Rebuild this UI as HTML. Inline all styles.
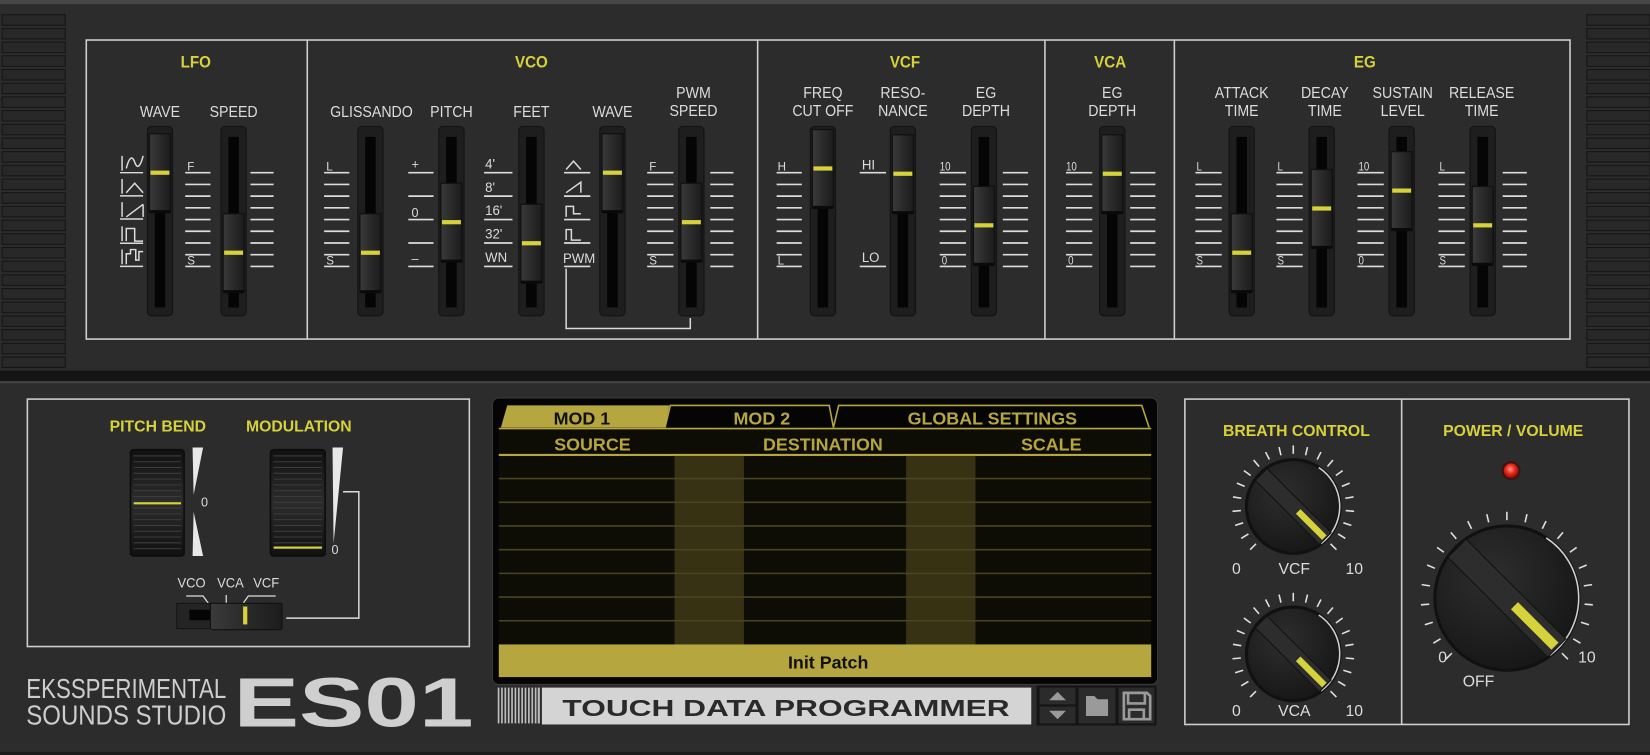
<!DOCTYPE html>
<html><head><meta charset="utf-8">
<style>
html,body{margin:0;padding:0;background:#2b2b2b;overflow:hidden;width:1650px;height:755px}
svg{display:block}
text{font-family:"Liberation Sans",sans-serif}
</style></head><body>
<svg id="s" width="1650" height="755" viewBox="0 0 1568 717" preserveAspectRatio="none" xmlns="http://www.w3.org/2000/svg">
<defs>
<linearGradient id="kn" x1="0" x2="1"><stop offset="0" stop-color="#3a3a3a"/><stop offset="0.5" stop-color="#2a2a2a"/><stop offset="1" stop-color="#1c1c1c"/></linearGradient>
<linearGradient id="wh" x1="0" x2="0" y1="0" y2="1"><stop offset="0" stop-color="#111"/><stop offset="0.5" stop-color="#2c2c2c"/><stop offset="1" stop-color="#111"/></linearGradient>
<radialGradient id="rk" cx="0.4" cy="0.35" r="0.7"><stop offset="0" stop-color="#2e2e2e"/><stop offset="1" stop-color="#161616"/></radialGradient>
<radialGradient id="led" cx="0.45" cy="0.4" r="0.6"><stop offset="0" stop-color="#ff9a8a"/><stop offset="0.5" stop-color="#ee2a1a"/><stop offset="1" stop-color="#8a0c05"/></radialGradient>
</defs>
</svg>
<script>
var o=[];
function R(x,y,w,h,f,extra){o.push('<rect x="'+x+'" y="'+y+'" width="'+w+'" height="'+h+'" fill="'+f+'" '+(extra||'')+'/>');}
function L(x1,y1,x2,y2,c,w){o.push('<line x1="'+x1+'" y1="'+y1+'" x2="'+x2+'" y2="'+y2+'" stroke="'+(c||'#d8d8d8')+'" stroke-width="'+(w||1.5)+'"/>');}
function T(x,y,s,t,c,sz,a,extra){o.push('<text x="'+x+'" y="'+y+'" font-size="'+sz+'" fill="'+c+'" text-anchor="'+(a||'middle')+'" '+(extra||'')+'>'+t+'</text>');}
function N(x,y,t,c,sz,a,k){k=k||0.84;o.push('<text transform="translate('+x+' '+y+') scale('+k+' 1)" x="0" y="0" font-size="'+sz+'" fill="'+c+'" text-anchor="'+(a||'middle')+'">'+t+'</text>');}
var Y='#d6d23c',W='#dcdcdc';
R(0,0,1568,717,'#2c2c2c');
R(0,0,1568,4,'#474747');
R(0,352,1568,10,'#151515');
R(0,362,1568,2,'#444');
R(0,714,1568,3,'#1a1a1a');
for(var y=14;y<348;y+=13){R(2,y,60,10,'#282828','stroke="#151515" stroke-width="1"');R(1508,y,60,10,'#282828','stroke="#151515" stroke-width="1"');}
o.push('<rect x="82" y="38" width="1410" height="284" fill="none" stroke="#cfcfcf" stroke-width="1.5"/>');
[292,720,993,1116].forEach(function(x){L(x,38,x,322,'#cfcfcf');});
[['LFO',186],['VCO',505],['VCF',860],['VCA',1055],['EG',1297]].forEach(function(a){N(a[1],64,a[0],Y,16,'middle',0.9);o[o.length-1]=o[o.length-1].replace('<text ','<text font-weight="bold" ');});
function lab(x,l1,l2){if(l2){N(x,93,l1,W,14.5,'middle',0.93);N(x,110,l2,W,14.5,'middle',0.93);}else N(x,111,l1,W,14.5,'middle',0.93);}
lab(152,'WAVE');lab(222,'SPEED');lab(353,'GLISSANDO');lab(429,'PITCH');lab(505,'FEET');lab(582,'WAVE');lab(659,'PWM','SPEED');
lab(782,'FREQ','CUT OFF');lab(858,'RESO-','NANCE');lab(937,'EG','DEPTH');lab(1057,'EG','DEPTH');
lab(1180,'ATTACK','TIME');lab(1259,'DECAY','TIME');lab(1333,'SUSTAIN','LEVEL');lab(1408,'RELEASE','TIME');
function scale(x,w,n,top,bot){n=n||9;top=top||164;bot=bot||253;for(var i=0;i<n;i++){var y=top+(bot-top)*i/(n-1);L(x,y,x+w,y,W,1.6);}}
function slider(cx,yy){
 R(cx-12,120,24,180,'#1e1e1e','rx="4" stroke="#121212"');
 R(cx-5,130,10,162,'#050505');
 R(cx-10,yy-37,20,74,'url(#kn)','stroke="#111" stroke-width="1.2"');
 L(cx-10,yy+37,cx+10,yy+37,'#0a0a0a',3);
 R(cx-9,yy-2,18,4,Y);
}
// LFO
scale(176,24);scale(238,22);
N(178,162,'F',W,11,'start',1);N(178,251,'S',W,11,'start',1);
o.push('<g fill="none" stroke="'+W+'" stroke-width="1.4">'+
 '<path d="M114 164 h22 M114 186 h22 M114 208 h22 M114 231 h22 M114 253 h22"/>'+
 '<path d="M116 162 v-14 M116 184 v-14 M116 206 v-14 M116 229 v-14 M116 251 v-14"/>'+
 '<path d="M120 160 c3 -12 6 -12 8 -6 c2 6 5 6 8 -6"/>'+
 '<path d="M120 183 l8 -9 l8 9"/>'+
 '<path d="M120 206 l16 -12"/><path d="M136 194 v12"/>'+
 '<path d="M120 229 v-12 h8 v12 h8"/>'+
 '<path d="M120 251 v-10 h4 v-4 h5 v10 h3 v-8 h4"/></g>');
slider(152,164);slider(222,240);
// VCO
scale(308,24);N(310,162,'L',W,11,'start',1);N(310,251,'S',W,11,'start',1);
scale(388,24,5);N(391,160,'+',W,12,'start',1);N(391,206,'0',W,12,'start',1);N(391,250,'–',W,12,'start',1);
scale(460,27,5);['4\'','8\'','16\'','32\'','WN'].forEach(function(t,i){N(461,160+i*22.2,t,W,13.5,'start',0.93);});
scale(536,25,5);
o.push('<g fill="none" stroke="'+W+'" stroke-width="1.4"><path d="M538 161 l7 -8 l7 8"/><path d="M538 183 l14 -10 v10"/><path d="M538 206 v-10 h7 v7 h7"/><path d="M538 228 v-10 h5 v10 h9"/></g>');
N(535,250,'PWM',W,13.5,'start',0.93);
scale(615,25);N(617,162,'F',W,11,'start',1);N(617,251,'S',W,11,'start',1);scale(675,22);
o.push('<path d="M538 255 V312 H656 V302" fill="none" stroke="'+W+'" stroke-width="1.4"/>');
slider(352,240);slider(429,211);slider(505,231);slider(582,164);slider(657,211);
// VCF
scale(738,24);N(739,162,'H',W,11,'start',1);N(739,251,'L',W,11,'start',1);
L(817,164,842,164,W,1.6);L(817,253,842,253,W,1.6);N(819,161,'HI',W,13.5,'start',0.93);N(819,249,'LO',W,13.5,'start',0.93);
scale(893,25);N(893,162,'10',W,11,'start');N(895,251,'0',W,11,'start');scale(953,24);
slider(782,160);slider(858,165);slider(935,214);
// VCA
scale(1013,25);N(1013,162,'10',W,11,'start');N(1015,251,'0',W,11,'start');scale(1074,24);
slider(1057,165);
// EG
[[1136,'L','S'],[1213,'L','S'],[1290,'10','0'],[1367,'L','S']].forEach(function(a){scale(a[0],25);N(a[0]+1,162,a[1],W,11,'start');N(a[0]+1,251,a[2],W,11,'start');});
scale(1428,23);
slider(1180,240);slider(1256,198);slider(1332,181);slider(1409,214);

// bottom left box
o.push('<rect x="26" y="379" width="420" height="235" fill="none" stroke="#cfcfcf" stroke-width="1.5"/>');
T(150,410,0,'PITCH BEND',Y,15,'middle','font-weight="bold"');
T(284,410,0,'MODULATION',Y,15,'middle','font-weight="bold"');
function wheel(x,y,w,h,yy){R(x,y,w,h,'url(#wh)','rx="3" stroke="#0c0c0c" stroke-width="1.5"');for(var i=y+6;i<y+h-3;i+=5.5)L(x+3,i,x+w-3,i,'#3c3c3c',1);L(x+3,yy,x+w-3,yy,Y,2);}
wheel(124,427,51,101,478);wheel(257,427,52,101,520);
o.push('<polygon points="183,425 193,425 184,470" fill="#e8e8e8"/><polygon points="184,486 193,528 183,528" fill="#e8e8e8"/>');
T(191,481,0,'0',W,12,'start');
o.push('<polygon points="316,425 326,425 317,516" fill="#e8e8e8"/>');T(315,526,0,'0',W,12,'start');
o.push('<path d="M326 467 H341 V587 H272" fill="none" stroke="'+W+'" stroke-width="1.4"/>');
N(182,558,'VCO',W,13,'middle',0.95);N(219,558,'VCA',W,13,'middle',0.95);N(253,558,'VCF',W,13,'middle',0.95);
o.push('<path d="M177 566 H193 L198 573 M215 565 V573 M231 573 L236 566 H262" fill="none" stroke="'+W+'" stroke-width="1.2"/>');
R(168,573,100,24,'#242424','stroke="#151515"');R(180,579,22,10,'#050505');
R(200,573,68,25,'url(#kn)','rx="2" stroke="#111"');R(231,576,4,17,Y);
// logo
T(25,663,0,'EKSSPERIMENTAL','#cdcdcd',26,'start','textLength="190" lengthAdjust="spacingAndGlyphs"');
T(25,688,0,'SOUNDS STUDIO','#cdcdcd',26,'start','textLength="190" lengthAdjust="spacingAndGlyphs"');
T(222,690,0,'ES01','#cfcfcf',66,'start','font-family="DejaVu Sans" font-weight="bold" textLength="228" lengthAdjust="spacingAndGlyphs"');

// display
R(468,378,632,272,'#050505','rx="6" stroke="#3a3a3a"');
R(474,406,620,206,'#0d0c05');
var DY='#b6a640';
o.push('<polygon points="476,406 482,385 636,385 632,406" fill="'+DY+'"/>');
o.push('<path d="M632 406 L637 385 H788 L792 406 M792 406 L797 385 H1085 L1092 406" fill="none" stroke="'+DY+'" stroke-width="1.5"/>');
L(474,407,1094,407,DY,1.5);
var df='font-family="DejaVu Sans Condensed" font-weight="bold"';
T(553,403,0,'MOD 1','#111',17,'middle',df);T(724,403,0,'MOD 2',DY,17,'middle',df);T(943,403,0,'GLOBAL SETTINGS',DY,17,'middle',df);
T(563,428,0,'SOURCE',DY,17,'middle',df);T(782,428,0,'DESTINATION',DY,17,'middle',df);T(999,428,0,'SCALE',DY,17,'middle',df);
L(474,432,1094,432,DY,2);
R(641,433,66,179,'#373214');R(861,433,66,179,'#373214');
for(var i=1;i<8;i++)L(474,432+i*22.5,1094,432+i*22.5,'#4a4420',1.5);
R(474,612,620,31,DY);
T(787,635,0,'Init Patch','#111',17,'middle',df);
// bottom bar
for(var i=0;i<12;i++)R(473+i*3.2,653,1.6,34,'#bdbdbd');
R(511,653,2,34,'#bdbdbd');
R(515,653,465,35,'#d4d4d4');
T(747,680,0,'TOUCH DATA PROGRAMMER','#2a2a2a',22,'middle','font-family="DejaVu Sans" font-weight="bold" textLength="425" lengthAdjust="spacingAndGlyphs"');
R(985,651,114,38,'#151515');
R(988,653,34,16,'#2b2b2b');R(988,671,34,16,'#2b2b2b');R(1025,653,35,34,'#2b2b2b');R(1063,653,34,34,'#2b2b2b');
o.push('<polygon points="997,665 1005,657 1013,665" fill="#9a9a9a"/><polygon points="997,675 1013,675 1005,683" fill="#9a9a9a"/>');
o.push('<path d="M1032 661 h8 l3 3 h10 v16 h-21z" fill="#9a9a9a"/>');
o.push('<path d="M1068 658 h22 l3 3 v22 h-25z M1072 658 v10 h16 v-10 M1073 683 v-9 h14 v9" fill="none" stroke="#9a9a9a" stroke-width="2.5"/>');

// right box
o.push('<rect x="1126" y="379" width="422" height="309" fill="none" stroke="#cfcfcf" stroke-width="1.5"/>');
L(1332,379,1332,688,'#cfcfcf');
T(1232,414,0,'BREATH CONTROL',Y,15,'middle','font-weight="bold"');
T(1438,414,0,'POWER / VOLUME',Y,15,'middle','font-weight="bold"');
function knobR(cx,cy,r,n){
 var s='';
 for(var i=0;i<n;i++){var a=(-135+270*i/(n-1))*Math.PI/180;var r1=r+6,r2=r+14;
  s+='<line x1="'+(cx+r1*Math.sin(a)).toFixed(1)+'" y1="'+(cy-r1*Math.cos(a)).toFixed(1)+'" x2="'+(cx+r2*Math.sin(a)).toFixed(1)+'" y2="'+(cy-r2*Math.cos(a)).toFixed(1)+'" stroke="#e0e0e0" stroke-width="1.5"/>';}
 o.push(s);
 o.push('<circle cx="'+cx+'" cy="'+cy+'" r="'+(r+2)+'" fill="#111"/>');
 o.push('<path d="M'+(cx+r*0.55)+' '+(cy-r*0.84)+' A'+r+' '+r+' 0 0 1 '+(cx+r*0.6)+' '+(cy+r*0.8)+'" fill="none" stroke="#cfcfcf" stroke-width="1.5"/>');
 o.push('<circle cx="'+cx+'" cy="'+cy+'" r="'+(r-1)+'" fill="url(#rk)"/>');
 var bw=r*0.36;
 o.push('<g transform="rotate(135 '+cx+' '+cy+')"><rect x="'+(cx-bw/2)+'" y="'+(cy-r+1)+'" width="'+bw+'" height="'+(2*r-2)+'" fill="#2d2d2d" stroke="#121212"/>'+
  '<rect x="'+(cx-r*0.07)+'" y="'+(cy-r*0.95)+'" width="'+(r*0.14)+'" height="'+(r*0.8)+'" fill="'+Y+'"/></g>');
}
knobR(1229,481,44,21);
T(1175,545,0,'0',W,15);T(1230,545,0,'VCF',W,15);T(1287,545,0,'10',W,15);
knobR(1229,621,44,21);
T(1175,680,0,'0',W,15);T(1230,680,0,'VCA',W,15);T(1287,680,0,'10',W,15);
o.push('<circle cx="1436" cy="447" r="9" fill="#3a1410"/><circle cx="1436" cy="447" r="7" fill="url(#led)"/>');
knobR(1432,568,68,21);
T(1371,629,0,'0',W,15);T(1508,629,0,'10',W,15);T(1405,652,0,'OFF',W,15);
document.getElementById('s').insertAdjacentHTML('beforeend',o.join(''));
</script>
</body></html>
